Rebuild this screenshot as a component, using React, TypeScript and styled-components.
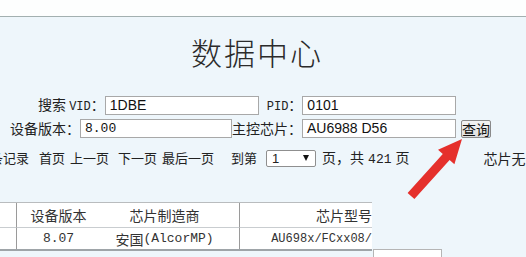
import React from "react";
import styled, { createGlobalStyle } from "styled-components";

const Global = createGlobalStyle`
  html, body { margin: 0; padding: 0; }
  body {
    background: #eef6fb;
    font-family: "Noto Sans CJK SC", "Liberation Sans", sans-serif;
    color: #222;
    overflow: hidden;
    width: 526px;
    height: 257px;
  }
`;

const Page = styled.div`
  position: relative;
  width: 526px;
  height: 257px;
  overflow: hidden;
  display: flex;
  flex-direction: column;
`;

const TopBar = styled.div`
  height: 16px;
  background: #fdfefe;
  border-bottom: 1px solid #a3b0b0;
  flex: none;
`;

const Title = styled.h1`
  margin: 18px 0 0;
  padding-right: 12px;
  font-family: "Noto Sans CJK SC", serif;
  font-weight: 300;
  font-size: 31px;
  line-height: 34px;
  letter-spacing: 2px;
  text-align: center;
  color: #2b2b2b;
`;

const Form = styled.div`
  margin-top: 27px;
  display: flex;
  flex-direction: column;
  gap: 4px;
`;

const Row = styled.div<{ $indent: number }>`
  display: flex;
  align-items: center;
  height: 19px;
  padding-left: ${(p) => p.$indent}px;
`;

const Label = styled.span<{ $gap?: number }>`
  flex: none;
  font-size: 14px;
  line-height: 19px;
  color: #222;
  white-space: nowrap;
  margin-left: ${(p) => p.$gap ?? 0}px;
`;

const Mono = styled.span<{ $size?: number; $space?: number }>`
  font-family: "Liberation Mono", monospace;
  font-size: ${(p) => p.$size ?? 12}px;
  margin: 0 ${(p) => p.$space ?? 0}px;
`;

const Input = styled.div<{ $w: number; $mono?: boolean }>`
  flex: none;
  box-sizing: border-box;
  width: ${(p) => p.$w}px;
  height: 19px;
  background: #fff;
  border: 1px solid #a8a8a8;
  padding-left: 4px;
  font-family: ${(p) =>
    p.$mono ? '"Liberation Mono", monospace' : '"Liberation Sans", sans-serif'};
  font-size: ${(p) => (p.$mono ? 13 : 14)}px;
  line-height: 17px;
  color: #111;
`;

const Button = styled.div`
  flex: none;
  box-sizing: border-box;
  margin-left: 5px;
  width: 30px;
  height: 18px;
  background: linear-gradient(#f4f4f4, #dedede);
  border: 1px solid #8a8a8a;
  border-radius: 2px;
  font-size: 14px;
  line-height: 16px;
  text-align: center;
  color: #111;
`;

const Pager = styled.div`
  margin-top: 11px;
  margin-left: -10px;
  display: flex;
  align-items: center;
  height: 18px;
  font-size: 13px;
  color: #222;
  white-space: nowrap;
`;

const PagerItem = styled.span<{ $gap: number; $size?: number }>`
  flex: none;
  margin-left: ${(p) => p.$gap}px;
  font-size: ${(p) => p.$size ?? 13}px;
  line-height: 18px;
`;

const Select = styled.div`
  flex: none;
  box-sizing: border-box;
  margin-left: 9px;
  width: 50px;
  height: 17px;
  background: #fff;
  border: 1px solid #8f8f8f;
  border-radius: 2px;
  display: flex;
  align-items: center;
  justify-content: space-between;
  padding: 0 6px 0 5px;
  font-family: "Liberation Sans", sans-serif;
  font-size: 13px;
`;

const Caret = styled.span`
  width: 0;
  height: 0;
  border-left: 3px solid transparent;
  border-right: 3px solid transparent;
  border-top: 6px solid #111;
`;

const TableWrap = styled.div`
  margin-top: 35px;
  width: 372px;
  overflow: hidden;
  flex: none;
`;

const Table = styled.div`
  display: grid;
  grid-template-columns: 17px 83px 140px 132px;
  background: #fff;
  border-top: 1px solid #b9bcbe;
  border-bottom: 2px solid #9ea4a8;
`;

const Cell = styled.div<{
  $h: number;
  $align?: string;
  $sep?: boolean;
  $bottom?: boolean;
  $padR?: number;
}>`
  height: ${(p) => p.$h}px;
  display: flex;
  align-items: center;
  justify-content: ${(p) => p.$align ?? "center"};
  padding-right: ${(p) => p.$padR ?? 0}px;
  font-size: 14px;
  color: #333;
  white-space: nowrap;
  border-right: ${(p) => (p.$sep ? "1px solid #9a9a9a" : "none")};
  border-bottom: ${(p) => (p.$bottom ? "1px solid #c9cdd0" : "none")};
  box-sizing: border-box;
  overflow: hidden;
`;

const Overlay = styled.svg`
  position: absolute;
  left: 0;
  top: 0;
  pointer-events: none;
`;

const Popup = styled.div`
  position: absolute;
  left: 373px;
  top: 249px;
  width: 67px;
  height: 12px;
  background: #fff;
  border: 1px solid #b5b5b5;
`;

export default function App() {
  return (
    <Page>
      <Global />
      <TopBar />
      <Title>数据中心</Title>
      <Form>
        <Row $indent={38}>
          <Label>
            搜索 <Mono $size={12}>VID</Mono>：
          </Label>
          <Input $w={154}>1DBE</Input>
          <Label $gap={8}>
            <Mono $size={12}>PID</Mono>：
          </Label>
          <Input $w={154}>0101</Input>
        </Row>
        <Row $indent={10}>
          <Label>设备版本：</Label>
          <Input $w={152} $mono>
            8.00
          </Input>
          <Label>主控芯片：</Label>
          <Input $w={154}>AU6988 D56</Input>
          <Button>查询</Button>
        </Row>
      </Form>
      <Pager>
        <PagerItem $gap={0}>条记录</PagerItem>
        <PagerItem $gap={10}>首页</PagerItem>
        <PagerItem $gap={5}>上一页</PagerItem>
        <PagerItem $gap={9}>下一页</PagerItem>
        <PagerItem $gap={5}>最后一页</PagerItem>
        <PagerItem $gap={17}>到第</PagerItem>
        <Select>
          <span>1</span>
          <Caret />
        </Select>
        <PagerItem $gap={6} $size={14}>
          页，共<Mono $size={13} $space={4}>421</Mono>页
        </PagerItem>
        <PagerItem $gap={74} $size={14}>芯片无</PagerItem>
      </Pager>
      <TableWrap>
        <Table>
          <Cell $h={25} $sep $bottom />
          <Cell $h={25} $bottom>设备版本</Cell>
          <Cell $h={25} $sep $bottom $padR={10}>芯片制造商</Cell>
          <Cell $h={25} $align="flex-end" $bottom>芯片型号</Cell>
          <Cell $h={21} $sep />
          <Cell $h={21}>
            <Mono $size={13}>8.07</Mono>
          </Cell>
          <Cell $h={21} $sep $padR={10}>
            安国<Mono $size={13}>(AlcorMP)</Mono>
          </Cell>
          <Cell $h={21} $align="flex-end">
            <Mono $size={12}>AU698x/FCxx08/</Mono>
          </Cell>
        </Table>
      </TableWrap>
      <Popup />
      <Overlay width={526} height={257} viewBox="0 0 526 257">
        <polygon
          points="407.6,193 414.4,199 449.6,160 454.4,164.2 462,139 438,149.8 442.8,154"
          fill="#e5302c"
        />
      </Overlay>
    </Page>
  );
}
